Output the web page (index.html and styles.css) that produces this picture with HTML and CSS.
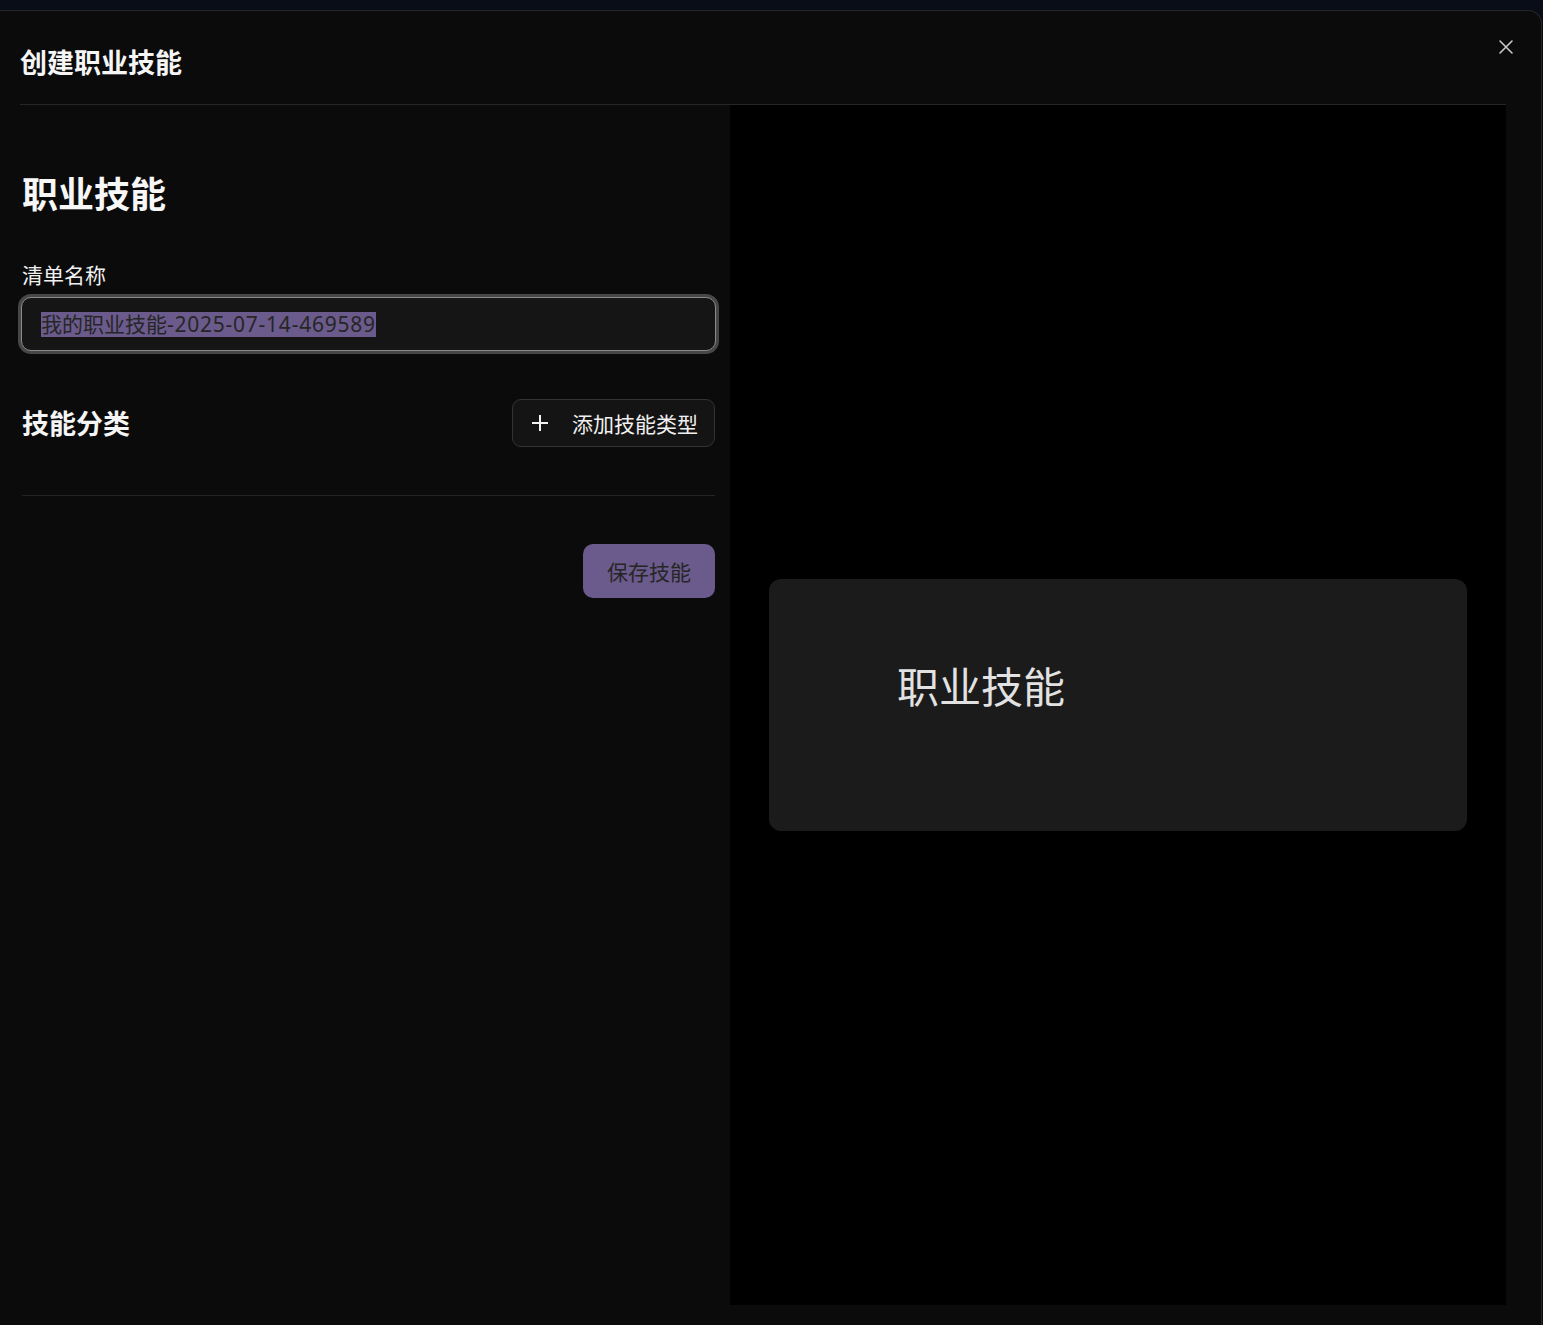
FILE: index.html
```html
<!DOCTYPE html>
<html lang="zh-CN">
<head>
<meta charset="utf-8">
<title>创建职业技能</title>
<link rel="stylesheet" href="styles.css">
</head>
<body>
<div class="modal">
  <div class="modal-header">
    <h2 class="modal-title">创建职业技能</h2>
    <button class="close-btn" aria-label="关闭">
      <svg width="16" height="16" viewBox="0 0 16 16"><path d="M2 2 L14 14 M14 2 L2 14" stroke="#c8c8c8" stroke-width="1.6" stroke-linecap="round" fill="none"/></svg>
    </button>
  </div>
  <div class="modal-body">
    <div class="form-col">
      <h1 class="form-heading">职业技能</h1>
      <label class="field-label">清单名称</label>
      <div class="input-box"><span class="selected">我的职业技能<span class="digits">-2025-07-14-469589</span></span></div>
      <div class="section-row">
        <h3 class="section-title">技能分类</h3>
        <button class="add-btn">
          <svg width="18" height="18" viewBox="0 0 18 18"><path d="M9 1 V17 M1 9 H17" stroke="#f2f2f2" stroke-width="2" fill="none"/></svg>
          <span>添加技能类型</span>
        </button>
      </div>
      <div class="divider"></div>
      <div class="actions">
        <button class="save-btn">保存技能</button>
      </div>
    </div>
    <div class="preview-col">
      <div class="preview-card">
        <div class="preview-text">职业技能</div>
      </div>
    </div>
  </div>
</div>
</body>
</html>
```
FILE: styles.css
```css
* { box-sizing: border-box; }
html, body { margin: 0; padding: 0; }
body {
  background: #080d18;
  font-family: "Noto Sans", "Noto Sans CJK SC", sans-serif;
  color: #f2f2f2;
  height: 1325px;
  overflow: hidden;
}
.modal {
  margin-top: 10px;
  width: 1542px;
  height: 1340px;
  background: #0b0b0b;
  border-top: 1px solid #262626;
  border-right: 1px solid #262626;
  border-top-right-radius: 14px;
  padding: 0 35px 0 20px;
}
.modal-header {
  height: 94px;
  border-bottom: 1px solid #262626;
  display: flex;
  align-items: center;
  justify-content: space-between;
}
.modal-title {
  margin: 0;
  font-family: "Noto Sans CJK SC", sans-serif;
  font-size: 27px;
  font-weight: 700;
  color: #f5f5f5;
  line-height: 34px;
  margin-top: 8px;
}
.close-btn {
  background: none;
  border: 0;
  padding: 0;
  width: 16px;
  height: 16px;
  margin-right: -8px;
  margin-bottom: 22px;
  display: flex;
}
.modal-body {
  display: flex;
  gap: 15px;
}
.form-col {
  width: 693px;
  margin-left: 2px;
  padding-top: 65px;
}
.form-heading {
  margin: 0;
  font-family: "Noto Sans CJK SC", sans-serif;
  font-size: 36px;
  font-weight: 700;
  line-height: 44px;
  color: #f7f7f7;
}
.field-label {
  display: block;
  margin-top: 46px;
  font-family: "Noto Sans CJK SC", sans-serif;
  font-size: 21px;
  line-height: 28px;
  color: #f0f0f0;
}
.input-box {
  margin-top: 9px;
  margin-left: -1px;
  width: 695px;
  height: 54px;
  border: 1px solid #8a8a8a;
  border-radius: 10px;
  box-shadow: 0 0 0 3px #474747;
  background: #151515;
  display: flex;
  align-items: center;
  padding-left: 19px;
  font-size: 21px;
}
.selected {
  background: #6b5a8c;
  color: #262626;
  line-height: 25px;
}
.digits {
  letter-spacing: 0.75px;
}
.section-row {
  margin-top: 48px;
  display: flex;
  align-items: center;
  justify-content: space-between;
}
.section-title {
  margin: 0;
  font-family: "Noto Sans CJK SC", sans-serif;
  font-size: 27px;
  font-weight: 700;
  line-height: 36px;
  color: #f5f5f5;
}
.add-btn {
  height: 48px;
  width: 203px;
  background: #141414;
  border: 1px solid #333;
  border-radius: 9px;
  display: flex;
  align-items: center;
  padding: 0 14px 0 18px;
  gap: 23px;
  color: #f0f0f0;
  font-family: "Noto Sans CJK SC", sans-serif;
  font-size: 21px;
}
.divider {
  margin-top: 48px;
  height: 1px;
  background: #232323;
}
.actions {
  display: flex;
  justify-content: flex-end;
  margin-top: 48px;
}
.save-btn {
  width: 132px;
  height: 54px;
  border: 0;
  border-radius: 10px;
  background: #6b5a8c;
  color: #262626;
  font-family: "Noto Sans CJK SC", sans-serif;
  font-size: 21px;
}
.preview-col {
  width: 776px;
  height: 1200px;
  background: #000;
  display: flex;
  align-items: center;
  justify-content: center;
}
.preview-card {
  width: 698px;
  height: 252px;
  background: #1b1b1b;
  border-radius: 12px;
  padding: 80px 128px 0;
}
.preview-text {
  font-family: "Noto Sans CJK SC", sans-serif;
  font-size: 42px;
  font-weight: 400;
  line-height: 52px;
  color: #e2e2e2;
}
```
